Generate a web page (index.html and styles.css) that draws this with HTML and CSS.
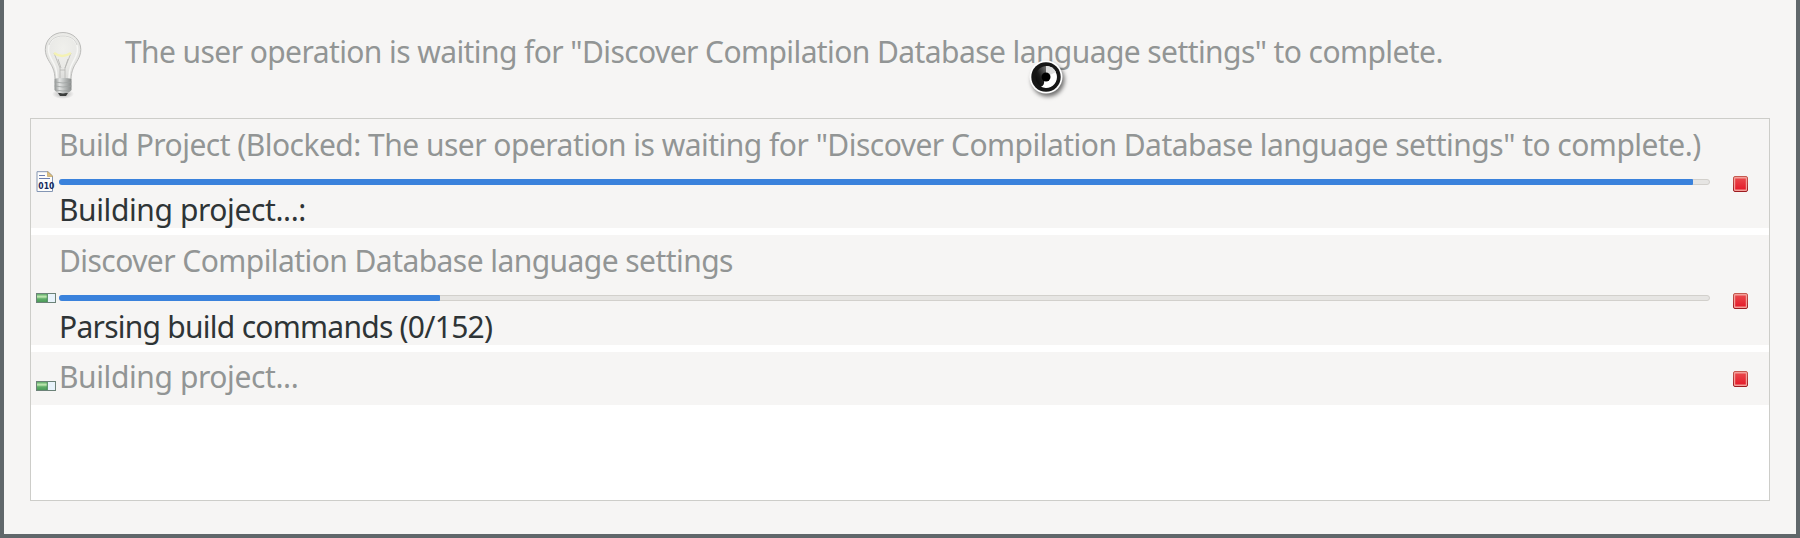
FILE: index.html
```html
<!DOCTYPE html>
<html lang="en">
<head>
<meta charset="utf-8">
<title>User Operation is Waiting</title>
<link rel="stylesheet" href="styles.css">
</head>
<body>
<svg class="defs" width="0" height="0" aria-hidden="true">
  <defs>
    <linearGradient id="red" x1="0" y1="0" x2="0" y2="1"><stop offset="0" stop-color="#e9474a"/><stop offset="1" stop-color="#e51c2b"/></linearGradient>
    <linearGradient id="edge" x1="0" y1="0" x2="0" y2="1"><stop offset="0" stop-color="#c55a50"/><stop offset="1" stop-color="#9c1a20"/></linearGradient>
    <linearGradient id="green" x1="0" y1="0" x2="0" y2="1"><stop offset="0" stop-color="#5aa865"/><stop offset=".35" stop-color="#c5ecb5"/><stop offset=".6" stop-color="#5fae68"/><stop offset="1" stop-color="#4c9a5a"/></linearGradient>
    <symbol id="stop" viewBox="0 0 15 16"><rect x=".5" y=".5" width="14" height="15" rx="1.5" fill="#f3a09a" stroke="url(#edge)"/><rect x="2.2" y="2.5" width="10.6" height="11" fill="url(#red)"/></symbol>
    <symbol id="job" viewBox="0 0 20 10"><rect x=".5" y=".5" width="19" height="9" fill="#e8f3fb" stroke="#6c8278"/><rect x="1" y="1" width="10" height="8" fill="url(#green)"/><path d="M11.3 1v8" stroke="#3f7d4c"/></symbol>
  </defs>
</svg>
<main class="dialog">
  <header class="message">
    <svg class="bulb" viewBox="0 0 40 70">
      <defs>
        <radialGradient id="glass" cx=".5" cy=".35" r=".6"><stop offset="0" stop-color="#f0f0ec"/><stop offset=".65" stop-color="#e9e9e6"/><stop offset="1" stop-color="#dededc"/></radialGradient>
        <linearGradient id="cap" x1="0" y1="0" x2="1" y2="0"><stop offset="0" stop-color="#8e9190"/><stop offset=".3" stop-color="#e2e4e3"/><stop offset=".6" stop-color="#b9bcbb"/><stop offset="1" stop-color="#878a89"/></linearGradient>
        <radialGradient id="shade"><stop offset="0" stop-color="#aaa"/><stop offset="1" stop-color="#aaa" stop-opacity="0"/></radialGradient>
      </defs>
      <ellipse cx="20" cy="63" rx="11" ry="5" fill="url(#shade)"/>
      <path d="M20 1.5C10 1.5 2.3 9 2.3 18.500c0 8 5 12.500 7.500 18.500 1.700 4 2 7 2.200 11h16c.2-4 .7-7 2.300-11 2.500-6 7.500-10.500 7.500-18.500C37.800 9 30 1.500 20 1.500z" fill="url(#glass)" stroke="#bcbcba"/>
      <path d="M20 5C11 5 5.500 11 5.500 18.500c0 7 5 12 7 18 1 3 1.500 7 1.500 11M20 5c9 0 14.500 6 14.500 13.500 0 7-5 12-7 18-1 3-1.500 7-1.500 11" fill="none" stroke="#f7f7f5" stroke-width="1.500"/>
      <path d="M6 14C8 8 13 5 20 5s12 3 14 9" fill="none" stroke="#c9c9c7" stroke-width=".8"/>
      <path d="M11 22l6 15v11M28 22l-6 15v11M15 28l3 9M25 28l-3 9M17 39h5" fill="none" stroke="#b5b5b3" stroke-width=".8"/>
      <path d="M11 22q8 6 17 0" fill="none" stroke="#f4f2b4" stroke-width="2.500"/>
      <path d="M15 62h10l-2 3h-6z" fill="#3c3e3d"/>
      <path d="M11.500 48q8.500-2 17 0v11q-2 3-8.500 3.500-6.500-.5-8.500-3.500z" fill="url(#cap)"/>
      <path d="M11.500 51q8.500 2 17 0M11.500 55q8.500 2 17 0M12 59q8 2 16 0" fill="none" stroke="#a0a3a2" stroke-width=".8"/>
    </svg>
    <p class="text muted headline">The user operation is waiting for "Discover Compilation Database language settings" to complete.</p>
  </header>
  <section class="list">
    <article class="job">
      <svg class="icon doc" viewBox="0 0 20 21"><path d="M1 .7h11L16.500 5v15.500H1z" fill="#fdfdfb" stroke="#8496b4"/><path d="M11.500.5L17 5.500h-5.500z" fill="#dfc07c" stroke="#b99c62" stroke-width=".6"/><path d="M3 4.500h6M3 7.500h11" stroke="#6a7db0"/><text class="bits" x="2.300" y="18" textLength="16" lengthAdjust="spacingAndGlyphs">010</text></svg>
      <div class="body">
        <p class="text muted title blocked">Build Project (Blocked: The user operation is waiting for "Discover Compilation Database language settings" to complete.)</p>
        <div class="track"><div class="fill" style="width:99.120%"></div></div>
        <p class="text detail building">Building project...:</p>
      </div>
      <svg class="stop"><use href="#stop"/></svg>
    </article>
    <article class="job second">
      <svg class="icon gauge"><use href="#job"/></svg>
      <div class="body">
        <p class="text muted title discover">Discover Compilation Database language settings</p>
        <div class="track"><div class="fill" style="width:23.110%"></div></div>
        <p class="text detail parsing">Parsing build commands (0/152)</p>
      </div>
      <svg class="stop"><use href="#stop"/></svg>
    </article>
    <article class="job short">
      <svg class="icon gauge"><use href="#job"/></svg>
      <div class="body"><p class="text muted title building">Building project...</p></div>
      <svg class="stop"><use href="#stop"/></svg>
    </article>
  </section>
</main>
<svg class="cursor" viewBox="0 0 44 44">
  <defs><linearGradient id="swirl" x1="0" y1="1" x2="1" y2="0"><stop offset="0" stop-color="#050505"/><stop offset=".45" stop-color="#1c1c1c"/><stop offset="1" stop-color="#777"/></linearGradient></defs>
  <circle cx="20" cy="20" r="16.500" fill="#fff"/>
  <circle cx="20" cy="20" r="14.700" fill="#161616"/>
  <path d="M20 20L15 29.500A11 11 0 0 1 20 9z" fill="url(#swirl)"/>
  <path d="M20 9A11 11 0 1 1 15 29.800Q19 28 18 23L20 20z" fill="#fff"/>
  <path d="M20 9q7 0 10 6L20 20z" fill="#ddd"/>
  <circle cx="20" cy="20" r="4.500" fill="#000"/>
</svg>
</body>
</html>
```
FILE: styles.css
```css
* { box-sizing: border-box; }
body { margin: 0; background: #f6f5f4; overflow: hidden; }
svg { display: block; }
.defs { position: absolute; }
.dialog {
  height: 538px;
  padding: 0 26px 33px;
  border: 4px solid #60676a;
  border-top: 0;
  background: #f6f5f4;
  display: flex;
  flex-direction: column;
}
.message { height: 118px; display: flex; align-items: flex-start; }
.bulb { width: 40px; height: 70px; margin: 31px 0 0 13px; }
.text {
  margin: 0;
  font-family: "Noto Sans", sans-serif;
  font-size: 30px;
  color: #2e3436;
  white-space: nowrap;
}
.muted { color: #929595; }
.headline { margin: 29px 0 0 42px; line-height: 46px; letter-spacing: -.585px; }
.list { flex: 1; border: 1px solid #cdcdc9; background: #fff; }
.job {
  height: 109px;
  margin-bottom: 7px;
  padding: 0 20px 0 5px;
  background: #f6f5f4;
  display: flex;
}
.second { height: 110px; }
.short { height: 53px; margin: 0; }
.icon { flex: none; width: 20px; height: 21px; margin-top: 52px; }
.gauge { height: 10px; margin-top: 58px; }
.short .gauge { margin-top: 29px; }
.bits { font: bold 9px "DejaVu Sans", sans-serif; fill: #15285e; }
.body { flex: none; width: 1651px; margin-left: 3px; }
.title { height: 49px; line-height: 51px; }
.second .title { line-height: 52px; }
.short .title { line-height: 49px; }
.blocked { letter-spacing: -.52px; }
.discover { letter-spacing: -.56px; }
.building { letter-spacing: -.4px; }
.parsing { letter-spacing: -.74px; }
.track { height: 6px; margin-top: 11px; background: #e6e5e3; border: 1px solid #d2d0cc; border-radius: 3px; }
.fill { height: 6px; margin: -1px; background: #3a82dc; border-radius: 3px 1px 1px 3px; }
.detail { margin-top: 5px; line-height: 40px; }
.second .detail { line-height: 41px; }
.stop { width: 15px; height: 16px; margin: 57px 0 0 23px; }
.second .stop { margin-top: 58px; }
.short .stop { margin-top: 19px; }
.cursor { position: absolute; left: 1026px; top: 57px; width: 44px; height: 44px; filter: drop-shadow(2px 3px 2px rgba(0,0,0,.55)); }
```
